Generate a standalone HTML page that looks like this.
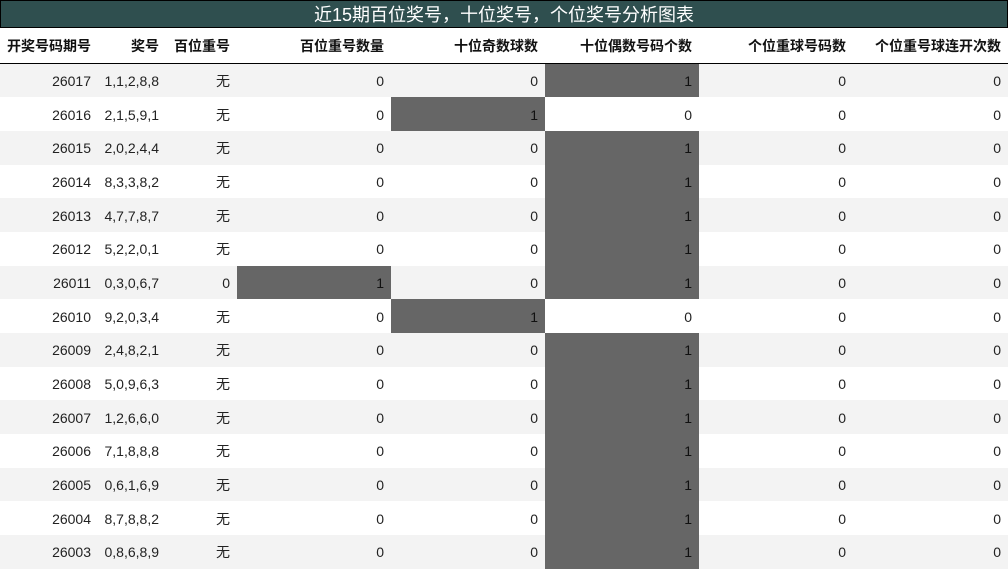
<!DOCTYPE html><html><head><meta charset="utf-8"><style>
body{margin:0;width:1008px;height:571px;overflow:hidden;background:#fff;font-family:"Liberation Sans","Noto Sans CJK SC",sans-serif;}
.t{height:26px;background:#2f4f4f;border:1px solid #000;color:#fff;font-size:18px;text-align:center;line-height:29px;}
table{border-collapse:collapse;table-layout:fixed;width:1008px;}
td,th{padding:0 7px 0 0;text-align:right;font-size:14px;color:#222;white-space:nowrap;overflow:hidden}
th{height:35px;font-weight:bold;border-bottom:1px solid #000;color:#111}
td{height:33.7px;padding-top:1px;box-sizing:border-box}
tr.o td{background:#f3f3f3}
td.g{background:#666!important;color:#111}
</style></head><body>
<div class="t">近15期百位奖号，十位奖号，个位奖号分析图表</div>
<table>
<colgroup><col style="width:98px"><col style="width:68px"><col style="width:71px"><col style="width:154px"><col style="width:154px"><col style="width:154px"><col style="width:154px"><col style="width:155px"></colgroup>
<tr><th>开奖号码期号</th><th>奖号</th><th>百位重号</th><th>百位重号数量</th><th>十位奇数球数</th><th>十位偶数号码个数</th><th>个位重球号码数</th><th>个位重号球连开次数</th></tr>
<tr class="o"><td>26017</td><td>1,1,2,8,8</td><td>无</td><td>0</td><td>0</td><td class="g">1</td><td>0</td><td>0</td></tr>
<tr><td>26016</td><td>2,1,5,9,1</td><td>无</td><td>0</td><td class="g">1</td><td>0</td><td>0</td><td>0</td></tr>
<tr class="o"><td>26015</td><td>2,0,2,4,4</td><td>无</td><td>0</td><td>0</td><td class="g">1</td><td>0</td><td>0</td></tr>
<tr><td>26014</td><td>8,3,3,8,2</td><td>无</td><td>0</td><td>0</td><td class="g">1</td><td>0</td><td>0</td></tr>
<tr class="o"><td>26013</td><td>4,7,7,8,7</td><td>无</td><td>0</td><td>0</td><td class="g">1</td><td>0</td><td>0</td></tr>
<tr><td>26012</td><td>5,2,2,0,1</td><td>无</td><td>0</td><td>0</td><td class="g">1</td><td>0</td><td>0</td></tr>
<tr class="o"><td>26011</td><td>0,3,0,6,7</td><td>0</td><td class="g">1</td><td>0</td><td class="g">1</td><td>0</td><td>0</td></tr>
<tr><td>26010</td><td>9,2,0,3,4</td><td>无</td><td>0</td><td class="g">1</td><td>0</td><td>0</td><td>0</td></tr>
<tr class="o"><td>26009</td><td>2,4,8,2,1</td><td>无</td><td>0</td><td>0</td><td class="g">1</td><td>0</td><td>0</td></tr>
<tr><td>26008</td><td>5,0,9,6,3</td><td>无</td><td>0</td><td>0</td><td class="g">1</td><td>0</td><td>0</td></tr>
<tr class="o"><td>26007</td><td>1,2,6,6,0</td><td>无</td><td>0</td><td>0</td><td class="g">1</td><td>0</td><td>0</td></tr>
<tr><td>26006</td><td>7,1,8,8,8</td><td>无</td><td>0</td><td>0</td><td class="g">1</td><td>0</td><td>0</td></tr>
<tr class="o"><td>26005</td><td>0,6,1,6,9</td><td>无</td><td>0</td><td>0</td><td class="g">1</td><td>0</td><td>0</td></tr>
<tr><td>26004</td><td>8,7,8,8,2</td><td>无</td><td>0</td><td>0</td><td class="g">1</td><td>0</td><td>0</td></tr>
<tr class="o"><td>26003</td><td>0,8,6,8,9</td><td>无</td><td>0</td><td>0</td><td class="g">1</td><td>0</td><td>0</td></tr>
</table></body></html>
